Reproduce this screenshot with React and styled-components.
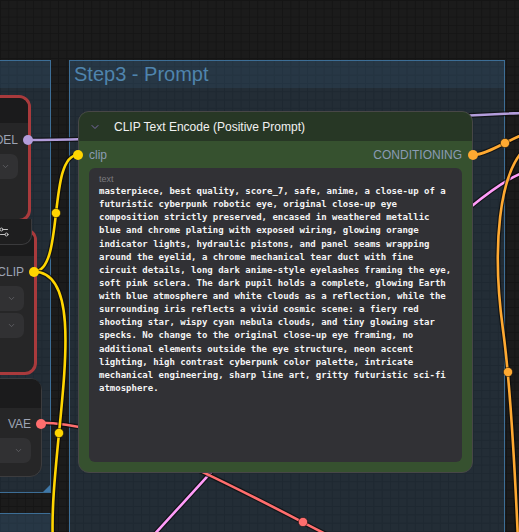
import React from "react";
import styled, { createGlobalStyle } from "styled-components";
import { ChevronDown, Settings2 } from "lucide-react";

const GlobalStyle = createGlobalStyle`
  html, body {
    margin: 0;
    padding: 0;
    background: #1b1b1b;
  }
  body {
    font-family: "Liberation Sans", Arial, sans-serif;
  }
`;

const Canvas = styled.div`
  position: relative;
  width: 519px;
  height: 532px;
  overflow: hidden;
  background-color: #1b1b1b;
  background-image:
    linear-gradient(#151515 1px, transparent 1px),
    linear-gradient(90deg, #151515 1px, transparent 1px);
  background-size: 8.3px 8.3px;
`;

/* ---- groups ---- */

const Group = styled.section`
  position: absolute;
  left: ${(p) => p.$x}px;
  top: ${(p) => p.$y}px;
  width: ${(p) => p.$w}px;
  height: ${(p) => p.$h}px;
  box-sizing: border-box;
  display: flex;
  flex-direction: column;
  background: rgba(70, 130, 180, 0.18);
  border: 1px solid #3d6e96;
`;

const GroupTitle = styled.div`
  flex: none;
  height: 27px;
  padding-left: 4px;
  background: rgba(70, 130, 180, 0.12);
  color: #4f84ad;
  font-size: 20px;
  line-height: 27px;
  white-space: nowrap;
`;

const ResizeCorner = styled.div`
  position: absolute;
  right: 0;
  bottom: 0;
  width: 0;
  height: 0;
  border-left: 7px solid transparent;
  border-bottom: 7px solid #3f78a8;
`;

/* ---- links ---- */

const LinkLayer = styled.svg`
  position: absolute;
  left: 0;
  top: 0;
  width: 519px;
  height: 532px;
  pointer-events: none;
`;

const LINKS = [
  { color: "#b39ddb", d: "M 27 140 C 200 140, 400 112, 640 110" },
  { color: "#ff9cf9", d: "M 525 172 C 455 195, 260 420, 140 550" },
  { color: "#ff6e6e", d: "M 41 422.7 C 181 422.7, 425 622, 565 622", mid: [303, 522] },
  { color: "#ffd500", d: "M 34 271.7 C 65 271.7, 47 155, 78 155", mid: [56, 213] },
  { color: "#ffd500", d: "M 34 271.7 C 116 271.7, 2 595, 84 595", mid: [59, 433] },
  { color: "#ffa931", d: "M 473 155 C 490 155, 520 131, 537 131", mid: [505, 143] },
  {
    color: "#ffa931",
    d: "M 528 146 C 498 170, 492 250, 503 330 C 510 380, 514 450, 518 540",
    mid: [508, 372],
  },
];

const Links = () => (
  <LinkLayer viewBox="0 0 519 532">
    {LINKS.map((l, i) => (
      <g key={i}>
        <path d={l.d} fill="none" stroke="#0c0c0c" strokeOpacity="0.7" strokeWidth="5" />
        <path d={l.d} fill="none" stroke={l.color} strokeWidth="2.6" />
        {l.mid && (
          <circle cx={l.mid[0]} cy={l.mid[1]} r="4.6" fill={l.color} stroke="#0c0c0c" strokeOpacity="0.5" strokeWidth="1" />
        )}
      </g>
    ))}
  </LinkLayer>
);

/* ---- side nodes (left column) ---- */

const SideNode = styled.div`
  position: absolute;
  left: ${(p) => p.$x}px;
  top: ${(p) => p.$y}px;
  width: ${(p) => p.$w}px;
  height: ${(p) => p.$h}px;
  box-sizing: border-box;
  display: flex;
  flex-direction: column;
  gap: 2px;
  border-radius: 12px;
  background: #262627;
  border: ${(p) => (p.$error ? "3px solid #a93a3c" : "1px solid #3c3c3e")};
`;

const SideTitle = styled.div`
  flex: none;
  height: ${(p) => p.$h}px;
  margin-bottom: ${(p) => p.$gap}px;
  border-radius: 9px 9px 0 0;
  background: #1b1b1c;
`;

const OutRow = styled.div`
  position: relative;
  flex: none;
  height: 24px;
  padding-right: 10px;
  display: flex;
  align-items: center;
  justify-content: flex-end;
  color: #9ea4b4;
  font-size: 12px;
`;

const SlotDot = styled.span`
  position: absolute;
  top: 50%;
  width: 10px;
  height: 10px;
  margin-top: -5px;
  border-radius: 50%;
  background: ${(p) => p.$color};
  ${(p) => (p.$side === "left" ? `left: ${p.$offset}px;` : `right: ${p.$offset}px;`)}
`;

const Combo = styled.div`
  flex: none;
  height: 25px;
  margin-right: 10px;
  padding-right: 8px;
  display: flex;
  align-items: center;
  justify-content: flex-end;
  border-radius: 7px;
  background: #313133;
  color: #67676c;
`;

const NodeFooter = styled.div`
  position: absolute;
  left: -90px;
  top: 219px;
  width: 122px;
  height: 26px;
  box-sizing: border-box;
  padding-right: 21px;
  display: flex;
  align-items: center;
  justify-content: flex-end;
  border: 1px solid #3a3a3c;
  border-top: none;
  border-radius: 0 0 10px 10px;
  background: #1e1e1f;
  color: #c4c4c4;
`;

/* ---- prompt node ---- */

const PromptNode = styled.div`
  position: absolute;
  left: 78px;
  top: 111px;
  width: 395px;
  height: 362px;
  box-sizing: border-box;
  display: flex;
  flex-direction: column;
  border: 1px solid #474747;
  border-radius: 11px;
  background: #36512f;
`;

const PromptHeader = styled.div`
  flex: none;
  height: 29px;
  padding-left: 10px;
  display: flex;
  align-items: center;
  gap: 13px;
  border-radius: 10px 10px 0 0;
  background: #273725;
  color: #f2f2f2;
  font-size: 12px;
  white-space: nowrap;
`;

const Chevron = styled(ChevronDown)`
  color: #7a6aa8;
  flex: none;
`;

const SlotRow = styled.div`
  position: relative;
  flex: none;
  height: 24px;
  margin-top: 2px;
  padding: 0 10px;
  display: flex;
  align-items: center;
  justify-content: space-between;
  color: #8b9bb4;
  font-size: 12px;
`;

const TextBox = styled.div`
  flex: 1;
  margin: 1px 10px 10px;
  padding: 6px 10px;
  border-radius: 6px;
  background: #313135;
  overflow: hidden;
`;

const TextLabel = styled.div`
  height: 11px;
  color: #7a7a7e;
  font-size: 9px;
  line-height: 11px;
`;

const PromptText = styled.div`
  color: #f4f4f4;
  font-family: "DejaVu Sans Mono", monospace;
  font-size: 9px;
  font-weight: bold;
  line-height: 13.13px;
  white-space: pre;
`;

const PROMPT = [
  "masterpiece, best quality, score_7, safe, anime, a close-up of a",
  "futuristic cyberpunk robotic eye, original close-up eye",
  "composition strictly preserved, encased in weathered metallic",
  "blue and chrome plating with exposed wiring, glowing orange",
  "indicator lights, hydraulic pistons, and panel seams wrapping",
  "around the eyelid, a chrome mechanical tear duct with fine",
  "circuit details, long dark anime-style eyelashes framing the eye,",
  "soft pink sclera. The dark pupil holds a complete, glowing Earth",
  "with blue atmosphere and white clouds as a reflection, while the",
  "surrounding iris reflects a vivid cosmic scene: a fiery red",
  "shooting star, wispy cyan nebula clouds, and tiny glowing star",
  "specks. No change to the original close-up eye framing, no",
  "additional elements outside the eye structure, neon accent",
  "lighting, high contrast cyberpunk color palette, intricate",
  "mechanical engineering, sharp line art, gritty futuristic sci-fi",
  "atmosphere.",
].join("\n");

const ComboChevron = () => <ChevronDown size={9} strokeWidth={2} />;

export default function App() {
  return (
    <>
      <GlobalStyle />
      <Canvas>
        <Group $x={-20} $y={60} $w={71} $h={433}>
          <GroupTitle />
          <ResizeCorner />
        </Group>
        <Group $x={-20} $y={513} $w={71} $h={40}>
          <GroupTitle />
        </Group>
        <Group $x={69} $y={60} $w={436} $h={500}>
          <GroupTitle>Step3 - Prompt</GroupTitle>
        </Group>

        <Links />

        <SideNode $x={-90} $y={228} $w={127} $h={147} $error>
          <SideTitle $h={25} $gap={2} />
          <OutRow>
            CLIP
            <SlotDot $color="#ffd500" $offset={-5} />
          </OutRow>
          <Combo>
            <ComboChevron />
          </Combo>
          <Combo>
            <ComboChevron />
          </Combo>
        </SideNode>

        <SideNode $x={-90} $y={95} $w={121} $h={127} $error>
          <SideTitle $h={25} $gap={3} />
          <OutRow>
            MODEL
            <SlotDot $color="#b39ddb" $offset={-5} />
          </OutRow>
          <Combo>
            <ComboChevron />
          </Combo>
        </SideNode>
        <NodeFooter>
          <Settings2 size={12} strokeWidth={2} />
        </NodeFooter>

        <SideNode $x={-90} $y={378} $w={132} $h={99}>
          <SideTitle $h={29} $gap={2} />
          <OutRow>
            VAE
            <SlotDot $color="#ff6e6e" $offset={-5} />
          </OutRow>
          <Combo>
            <ComboChevron />
          </Combo>
        </SideNode>

        <PromptNode>
          <PromptHeader>
            <Chevron size={12} strokeWidth={2} />
            CLIP Text Encode (Positive Prompt)
          </PromptHeader>
          <SlotRow>
            <SlotDot $side="left" $color="#ffd500" $offset={-6} />
            <span>clip</span>
            <span>CONDITIONING</span>
            <SlotDot $color="#ffa931" $offset={-6} />
          </SlotRow>
          <TextBox>
            <TextLabel>text</TextLabel>
            <PromptText>{PROMPT}</PromptText>
          </TextBox>
        </PromptNode>
      </Canvas>
    </>
  );
}
